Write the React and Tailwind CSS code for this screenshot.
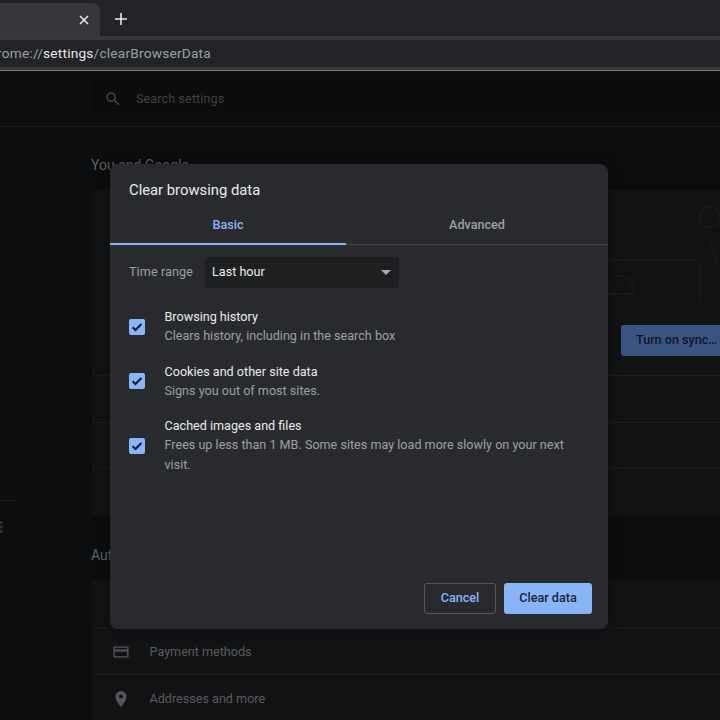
import React from "react";

function Check() {
  return (
    <span className="flex h-[16px] w-[16px] shrink-0 items-center justify-center rounded-[2px] bg-[#8ab4f8]">
      <svg width="12" height="12" viewBox="0 0 12 12" fill="none">
        <path d="M1.6 6.200 4.500 9 10.400 3" stroke="#0f1c33" strokeWidth="2" />
      </svg>
    </span>
  );
}

function Option({ title, children, boxClass }) {
  return (
    <div className="flex items-start">
      <div className={`w-[35.5px] shrink-0 ${boxClass}`}>
        <Check />
      </div>
      <div>
        <div className="h-[19px] text-[12.6px] leading-[19px] text-[#e8eaed]">{title}</div>
        <div className="text-[12.6px] leading-[19.5px] text-[#9aa0a6]">{children}</div>
      </div>
    </div>
  );
}

export default function App() {
  return (
    <div className="relative h-[720px] w-[720px] overflow-hidden bg-[#0c0d0f] font-['Roboto','Liberation_Sans',sans-serif]">
      {/* Tab strip */}
      <div className="flex h-[36px] items-stretch bg-[#222327]">
        <div className="mt-[3px] flex w-[100px] items-center justify-end rounded-tr-[8px] bg-[#36373b] pr-[11px]">
          <svg width="10" height="10" viewBox="0 0 10 10" fill="none">
            <path d="M1 1l8 8M9 1L1 9" stroke="#e8eaed" strokeWidth="1.5" />
          </svg>
        </div>
        <div className="ml-[14px] flex items-center pt-[2px]">
          <svg width="14" height="14" viewBox="0 0 14 14" fill="none">
            <path d="M7 1v12M1 7h12" stroke="#e8eaed" strokeWidth="1.6" />
          </svg>
        </div>
      </div>
      <div className="h-[4px] bg-[#37383c]" />
      {/* Address bar */}
      <div className="flex h-[27px] items-center overflow-hidden bg-[#222327]">
        <div className="-ml-[3px] whitespace-nowrap text-[13.7px] tracking-[0.2px] text-[#9aa0a6]">
          rome://<span className="text-[#e8eaed]">settings</span>/clearBrowserData
        </div>
      </div>
      <div className="h-[4px] border-b border-[#77787a] bg-[#393a3e]" />

      {/* Settings header */}
      <div className="flex h-[56px] items-center border-b border-[#17181a] bg-[#0e0e0f] pl-[92px]">
        <div className="flex h-[38px] flex-1 items-center bg-[#0c0c0d] pl-[12px]">
          <svg width="18" height="18" viewBox="0 0 24 24" fill="#45464a">
            <path d="M15.500 14h-.79l-.28-.27A6.470 6.470 0 0 0 16 9.500 6.500 6.500 0 1 0 9.500 16c1.610 0 3.090-.59 4.230-1.570l.27.28v.79l5 4.990L20.490 19l-4.990-5zm-6 0C7.010 14 5 11.990 5 9.500S7.010 5 9.500 5 14 7.010 14 9.500 11.990 14 9.500 14z" />
          </svg>
          <span className="ml-[14px] pt-[2px] text-[12.6px] tracking-[0.1px] text-[#3f4043]">Search settings</span>
        </div>
      </div>

      {/* Page body */}
      <div className="flex">
        <div className="w-[92px] shrink-0 pt-[373px]">
          <div className="h-px w-[18px] bg-[#1a1b1d]" />
          <svg width="4" height="14" viewBox="0 0 4 14" fill="#2e2f32" className="mt-[19px]">
            <path d="M0 1h2.500v3H0zM0 5.500h2.500v3H0zM0 10h2.500v3H0z" />
          </svg>
        </div>
        <div className="min-w-0 flex-1">
          <div className="-ml-px flex h-[63px] items-end pb-[14px] text-[14px] text-[#5f6063]">You and Google</div>
          <div className="h-[325px] bg-[#111214]">
            <div className="flex h-[186px] items-end justify-end border-b border-[#1b1c1e] pb-[19px]">
              <div className="flex h-[31px] w-[99px] shrink-0 items-center rounded-l-[3px] bg-[#3a5482] pl-[15px] text-[12.6px] font-medium whitespace-nowrap text-[#0c1626]">
                Turn on sync…
              </div>
            </div>
            <div className="h-[47px] border-b border-[#1b1c1e]" />
            <div className="h-[46px] border-b border-[#1b1c1e]" />
          </div>
          <div className="-ml-px flex h-[65px] items-end pb-[14px] text-[14px] text-[#5f6063]">Autofill</div>
          <div className="bg-[#111214]">
            <div className="h-[48px] border-b border-[#1b1c1e]" />
            <div className="flex h-[47px] items-center border-b border-[#1b1c1e] pl-[21px] pt-[2px] text-[12.6px] text-[#5a5b5e]">
              <svg width="16" height="16" viewBox="0 0 16 16" fill="#55565a" className="mr-[20.500px]">
                <path fillRule="evenodd" d="M0.500 2.500h15v11h-15zM1.800 3.800v1.600h12.400V3.800zM1.800 7.600v4.600h12.400V7.600z" />
              </svg>
              Payment methods
            </div>
            <div className="flex h-[47px] items-center pl-[21px] pt-[1px] text-[12.6px] text-[#5a5b5e]">
              <svg width="16" height="18" viewBox="0 0 16 18" className="mr-[20.500px]">
                <path fill="#55565a" fillRule="evenodd" d="M8 1a5.600 5.600 0 0 0-5.600 5.600C2.400 10.800 8 17 8 17s5.600-6.200 5.600-10.400A5.600 5.600 0 0 0 8 1zm0 7.600a2 2 0 1 1 0-4 2 2 0 0 1 0 4z" />
              </svg>
              Addresses and more
            </div>
          </div>
        </div>
      </div>

      {/* Faint illustration behind the dialog */}
      <svg className="absolute left-[600px] top-[200px]" width="120" height="100" viewBox="0 0 120 100" fill="none" stroke="#1e1f22" strokeWidth="1">
        <circle cx="110" cy="17" r="10.500" />
        <path d="M111 44c2 8 5 15 9 22" />
        <path d="M10 60h85a5 5 0 0 1 5 5v41" />
        <path d="M8 94h24a12 12 0 0 0-24-10" />
      </svg>

      {/* Dialog */}
      <div className="absolute left-[110px] top-[164px] flex h-[465px] w-[498px] flex-col rounded-[8px] bg-[#292a2d] shadow-[0_0_14px_rgba(0,0,0,0.35)]">
        <div className="pl-[19px] pt-[16px] text-[14.8px] leading-[21px] text-[#e8eaed]">Clear browsing data</div>
        <div className="mt-[13px] flex h-[31px] border-b border-[#45464a]">
          <div className="relative w-[236px] pt-[2px] text-center text-[12.6px] leading-[18px] font-medium text-[#8ab4f8]">
            Basic
            <span className="absolute inset-x-0 -bottom-[1px] h-[2px] bg-[#8ab4f8]" />
          </div>
          <div className="flex-1 pt-[2px] text-center text-[12.6px] leading-[18px] font-medium text-[#9aa0a6]">Advanced</div>
        </div>

        <div className="mt-[12px] flex items-center pl-[19px]">
          <span className="w-[76px] text-[12.6px] tracking-[0.1px] text-[#9aa0a6]">Time range</span>
          <div className="flex h-[31px] w-[194px] items-center justify-between rounded-[4px] bg-[#1e1f21] pl-[7px] pr-[8px] text-[12.6px] text-[#e8eaed]">
            Last hour
            <svg width="10" height="5" viewBox="0 0 10 5">
              <path d="M0 0h10L5 5z" fill="#a8abaf" />
            </svg>
          </div>
        </div>

        <div className="mt-[19px] flex flex-col gap-[16px] pl-[19px] pr-[38px]">
          <Option title="Browsing history" boxClass="pt-[12px]">Clears history, including in the search box</Option>
          <Option title="Cookies and other site data" boxClass="pt-[11px]">Signs you out of most sites.</Option>
          <Option title="Cached images and files" boxClass="pt-[22px]">
            Frees up less than 1 MB. Some sites may load more slowly on your next visit.
          </Option>
        </div>

        <div className="mt-auto mb-[15px] flex justify-end gap-[8px] pr-[16px]">
          <div className="flex h-[31px] w-[72px] items-center justify-center rounded-[3px] border border-[#56575b] text-[12.6px] font-medium text-[#8ab4f8]">Cancel</div>
          <div className="flex h-[31px] w-[88px] items-center justify-center rounded-[3px] bg-[#8ab4f8] text-[12.6px] font-medium text-[#17243b]">Clear data</div>
        </div>
      </div>
    </div>
  );
}
